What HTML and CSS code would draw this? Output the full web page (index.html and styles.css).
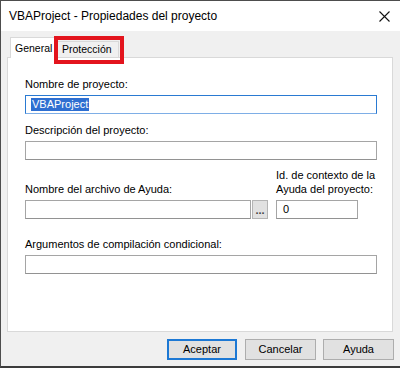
FILE: index.html
```html
<!doctype html>
<html lang="es">
<head>
  <meta charset="utf-8">
  <title>VBAProject - Propiedades del proyecto</title>
  <link rel="stylesheet" href="styles.css">
</head>
<body>
  <div class="win">
    <div class="titlebar">
      <span class="title">VBAProject - Propiedades del proyecto</span>
      <svg class="close" width="11" height="11" viewBox="0 0 11 11">
        <path d="M0.5 0.5 L10.5 10.5 M10.5 0.5 L0.5 10.5" stroke="#111" stroke-width="1.1" fill="none"/>
      </svg>
    </div>
    <div class="client">
      <div class="tabs">
        <div class="tab tab_on">General</div>
        <div class="tab">Protección</div>
      </div>
      <div class="panel">
        <div class="field">
          <div class="lbl">Nombre de proyecto:</div>
          <div class="inp inp_focus"><span class="sel">VBAProject</span></div>
        </div>
        <div class="field field_2">
          <div class="lbl">Descripción del proyecto:</div>
          <div class="inp"></div>
        </div>
        <div class="row field_3">
          <div class="col_help">
            <div class="lbl">Nombre del archivo de Ayuda:</div>
            <div class="help_line">
              <div class="inp inp_help"></div>
              <div class="dots">...</div>
            </div>
          </div>
          <div class="col_id">
            <div class="lbl">Id. de contexto de la<br>Ayuda del proyecto:</div>
            <div class="inp inp_id">0</div>
          </div>
        </div>
        <div class="field field_4">
          <div class="lbl">Argumentos de compilación condicional:</div>
          <div class="inp"></div>
        </div>
      </div>
      <div class="buttons">
        <div class="btn btn_default">Aceptar</div>
        <div class="btn">Cancelar</div>
        <div class="btn">Ayuda</div>
      </div>
    </div>
    <div class="mark"></div>
  </div>
</body>
</html>
```

FILE: styles.css
```css
* {
  box-sizing: border-box;
}

body {
  margin: 0;
  font-family: "Liberation Sans", Arial, sans-serif;
  font-size: 11px;
  color: #000;
}

.win {
  position: relative;
  width: 400px;
  height: 368px;
  border-top: 1px solid #4d4d4d;
  border-left: 1px solid #4d4d4d;
  border-bottom: 2px solid #3c3c3c;
  background: #f0f0f0;
  overflow: hidden;
}

.titlebar {
  height: 30px;
  background: #fff;
  display: flex;
  align-items: center;
  justify-content: space-between;
  padding: 0 10px 0 8px;
}

.title {
  font-size: 12px;
  color: #000;
  margin-top: -1px;
}

.close {
  margin-top: 1px;
}

.client {
  height: 335px;
  padding: 6px 7px 0 6px;
}

.tabs {
  display: flex;
  align-items: flex-end;
  height: 20px;
  padding-left: 3px;
  font-size: 10.5px;
}

.tab {
  height: 16px;
  line-height: 14px;
  padding: 0 6px 0 5px;
  border: 1px solid #d9d9d9;
  border-bottom: none;
  background: #f0f0f0;
  width: 63px;
  white-space: nowrap;
}

.tab_on {
  position: relative;
  z-index: 1;
  height: 21px;
  width: 46px;
  margin-bottom: -1px;
  padding: 3px 0 0 4px;
  background: #fff;
}

.panel {
  height: 275px;
  background: #fff;
  border: 1px solid #d9d9d9;
  padding: 19px 15px 0 17px;
}

.lbl {
  line-height: 14px;
  margin-bottom: 4px;
  white-space: nowrap;
}

.inp {
  height: 19px;
  background: #fff;
  border: 1px solid #a5a5a5;
  border-bottom-color: #929292;
  line-height: 17px;
  padding-left: 6px;
}

.inp_focus {
  border-color: #2a7ad2;
  border-bottom-color: #7eaee6;
  padding-left: 5px;
}

.sel {
  display: inline-block;
  background: #2e6fd1;
  color: #fff;
  line-height: 13px;
  padding: 0 1px;
  margin-top: 2px;
  vertical-align: top;
}

.field_2 {
  margin-top: 9px;
}

.row {
  display: flex;
  align-items: flex-end;
  gap: 8px;
}

.field_3 {
  margin-top: 8px;
}

.help_line {
  display: flex;
  gap: 1px;
}

.inp_help {
  width: 226px;
}

.dots {
  width: 16px;
  height: 19px;
  background: #e1e1e1;
  border: 1px solid #b4b4b4;
  color: #444;
  text-align: center;
  font-size: 11px;
  font-weight: bold;
  line-height: 19px;
}

.col_id .inp_id {
  width: 82px;
}

.field_4 {
  margin-top: 18px;
}

.buttons {
  display: flex;
  justify-content: flex-end;
  gap: 7px;
  margin-top: 7px;
  margin-right: -1px;
}

.btn {
  width: 71px;
  height: 21px;
  background: #e1e1e1;
  border: 1px solid #adadad;
  text-align: center;
  line-height: 19px;
}

.btn_default {
  width: 70px;
  margin-right: 1px;
  border: 2px solid #1c78d4;
  line-height: 17px;
}

.mark {
  position: absolute;
  left: 53px;
  top: 35px;
  width: 70px;
  height: 28px;
  border: 4px solid #e3141d;
  z-index: 2;
}
```
